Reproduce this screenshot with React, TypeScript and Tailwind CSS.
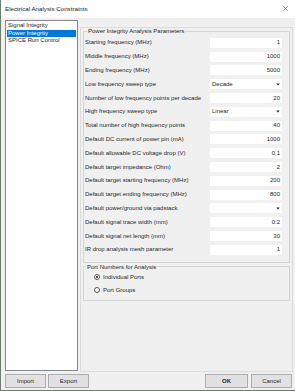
const PARAMS: { label: string; value: string; select?: boolean }[] = [
  { label: 'Starting frequency (MHz)', value: '1' },
  { label: 'Middle frequency (MHz)', value: '1000' },
  { label: 'Ending frequency (MHz)', value: '5000' },
  { label: 'Low frequency sweep type', value: 'Decade', select: true },
  { label: 'Number of low frequency points per decade', value: '20' },
  { label: 'High frequency sweep type', value: 'Linear', select: true },
  { label: 'Total number of high frequency points', value: '40' },
  { label: 'Default DC current of power pin (mA)', value: '1000' },
  { label: 'Default allowable DC voltage drop (V)', value: '0.1' },
  { label: 'Default target impedance (Ohm)', value: '2' },
  { label: 'Default target starting frequency (MHz)', value: '200' },
  { label: 'Default target ending frequency (MHz)', value: '800' },
  { label: 'Default power/ground via padstack', value: '', select: true },
  { label: 'Default signal trace width (mm)', value: '0.2' },
  { label: 'Default signal net length (mm)', value: '30' },
  { label: 'IR drop analysis mesh parameter', value: '1' },
]

const NAV = ['Signal Integrity', 'Power Integrity', 'SPICE Run Control']

function Arrow() {
  return (
    <svg width="4" height="3" viewBox="0 0 4 3" className="shrink-0">
      <path d="M0.3 0.6h3.4L2 2.6z" fill="#222" />
    </svg>
  )
}

function Radio({ checked, label }: { checked?: boolean; label: string }) {
  return (
    <div className="flex items-center h-[13px] gap-[3px]">
      <span className="w-[6px] h-[6px] rounded-full border border-[#555] bg-white flex items-center justify-center">
        {checked && <span className="w-[2px] h-[2px] rounded-full bg-[#111]" />}
      </span>
      <span>{label}</span>
    </div>
  )
}

function Btn({ children, primary }: { children: string; primary?: boolean }) {
  return (
    <button
      className={
        'h-[14px] flex items-center justify-center border bg-[#e1e1e1] leading-none border-[#adadad] ' +
        (primary ? 'w-[43px] font-bold' : 'w-[41px]')
      }
    >
      {children}
    </button>
  )
}

export default function App() {
  return (
    <div
      className="w-[295px] h-[391px] flex flex-col bg-[#f0f0f0] border-l border-b border-[#6f7d6c] text-[6px] text-[#262626] overflow-hidden"
      style={{ fontFamily: '"Liberation Sans", Arial, sans-serif' }}
    >
      {/* title bar */}
      <div className="h-[18px] bg-white flex items-center justify-between pl-[4px] pr-[7px] pb-[1px] shrink-0">
        <span className="text-[6.2px] text-[#222]">Electrical Analysis Constraints</span>
        <svg width="5" height="5" viewBox="0 0 5 5">
          <path d="M0.3 0.3L4.7 4.7M4.7 0.3L0.3 4.7" stroke="#444" strokeWidth="0.6" />
        </svg>
      </div>

      <div className="flex flex-1 pt-[2px] pl-[4px] pr-[2px]">
        {/* page list */}
        <div className="w-[73px] h-[351px] bg-white border border-[#828790] pt-[1px] px-[1px]">
          {NAV.map((n, i) => (
            <div
              key={n}
              className={'h-[7.5px] leading-[7.5px] pl-[1px] ' + (i === 1 ? 'bg-[#0078d7] text-white' : '')}
            >
              {n}
            </div>
          ))}
        </div>

        {/* page */}
        <div className="ml-[2px] mt-[7px] w-[213px] h-[345px] border border-[#dcdcdc] px-[2px]">
          <fieldset className="border border-[#d5d5d5] px-[1px] pt-[1px] pb-[5px] mt-[-1px]">
            <legend className="ml-[2px] px-[1px] leading-[8px]">Power Integrity Analysis Parameters</legend>
            {PARAMS.map(p => (
              <div key={p.label} className="flex items-center justify-between h-[13.8px] pr-[6px]">
                <span>{p.label}</span>
                <div
                  className={
                    'w-[72px] h-[10px] bg-white flex items-center px-[2px] ' +
                    (p.select ? 'justify-between' : 'justify-end')
                  }
                >
                  <span>{p.value}</span>
                  {p.select && <Arrow />}
                </div>
              </div>
            ))}
          </fieldset>

          <fieldset className="border border-[#d5d5d5] pl-[10px] pb-[3px]">
            <legend className="ml-[-8px] px-[1px] leading-[8px]">Port Numbers for Analysis</legend>
            <Radio checked label="Individual Ports" />
            <Radio label="Port Groups" />
          </fieldset>
        </div>
      </div>

      {/* footer buttons */}
      <div className="flex items-center justify-between h-[14px] mt-[2px] mb-[2px] pl-[4px] pr-[3px] shrink-0">
        <div className="flex gap-[2px]">
          <Btn>Import</Btn>
          <Btn>Export</Btn>
        </div>
        <div className="flex gap-[3px]">
          <Btn primary>OK</Btn>
          <Btn>Cancel</Btn>
        </div>
      </div>
    </div>
  )
}
